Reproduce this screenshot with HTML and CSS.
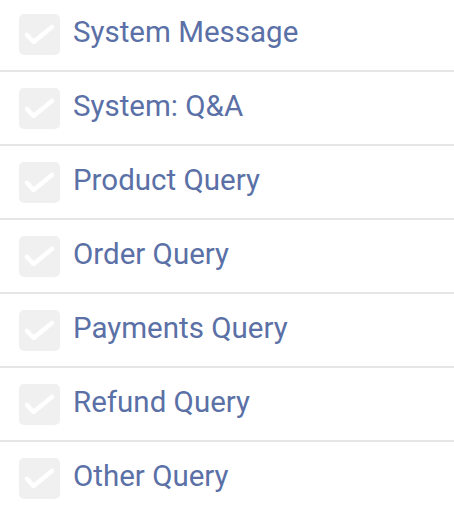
FILE: index.html
```html
<!DOCTYPE html>
<html>
<head>
<meta charset="utf-8">
<link rel="stylesheet" href="styles.css">
</head>
<body>
<ul class="list">
  <li class="row"><span class="box"><svg viewBox="0 0 41 41" width="41" height="41"><path d="M8 21 L14.5 28 L33 13" fill="none" stroke="#fff" stroke-width="4.5" stroke-linecap="round" stroke-linejoin="round"/></svg></span><span class="label">System Message</span></li>
  <li class="row"><span class="box"><svg viewBox="0 0 41 41" width="41" height="41"><path d="M8 21 L14.5 28 L33 13" fill="none" stroke="#fff" stroke-width="4.5" stroke-linecap="round" stroke-linejoin="round"/></svg></span><span class="label">System: Q&amp;A</span></li>
  <li class="row"><span class="box"><svg viewBox="0 0 41 41" width="41" height="41"><path d="M8 21 L14.5 28 L33 13" fill="none" stroke="#fff" stroke-width="4.5" stroke-linecap="round" stroke-linejoin="round"/></svg></span><span class="label">Product Query</span></li>
  <li class="row"><span class="box"><svg viewBox="0 0 41 41" width="41" height="41"><path d="M8 21 L14.5 28 L33 13" fill="none" stroke="#fff" stroke-width="4.5" stroke-linecap="round" stroke-linejoin="round"/></svg></span><span class="label">Order Query</span></li>
  <li class="row"><span class="box"><svg viewBox="0 0 41 41" width="41" height="41"><path d="M8 21 L14.5 28 L33 13" fill="none" stroke="#fff" stroke-width="4.5" stroke-linecap="round" stroke-linejoin="round"/></svg></span><span class="label">Payments Query</span></li>
  <li class="row"><span class="box"><svg viewBox="0 0 41 41" width="41" height="41"><path d="M8 21 L14.5 28 L33 13" fill="none" stroke="#fff" stroke-width="4.5" stroke-linecap="round" stroke-linejoin="round"/></svg></span><span class="label">Refund Query</span></li>
  <li class="row"><span class="box"><svg viewBox="0 0 41 41" width="41" height="41"><path d="M8 21 L14.5 28 L33 13" fill="none" stroke="#fff" stroke-width="4.5" stroke-linecap="round" stroke-linejoin="round"/></svg></span><span class="label">Other Query</span></li>
</ul>
</body>
</html>
```
FILE: styles.css
```css
html, body {
  margin: 0;
  padding: 0;
  background: #fff;
}
.list {
  list-style: none;
  margin: -2px 0 0;
  padding: 0;
}
.row {
  display: flex;
  align-items: center;
  height: 72px;
  padding-left: 19px;
  border-bottom: 2px solid #e6e6e6;
}
.box {
  width: 41px;
  height: 41px;
  margin-top: 1px;
  background: #f0f0f0;
  border-radius: 5px;
  flex: none;
  display: block;
}
.box svg {
  display: block;
}
.label {
  margin-left: 13px;
  margin-top: -4px;
  font-family: Roboto, sans-serif;
  font-size: 29.5px;
  color: #5a70a6;
}
```
